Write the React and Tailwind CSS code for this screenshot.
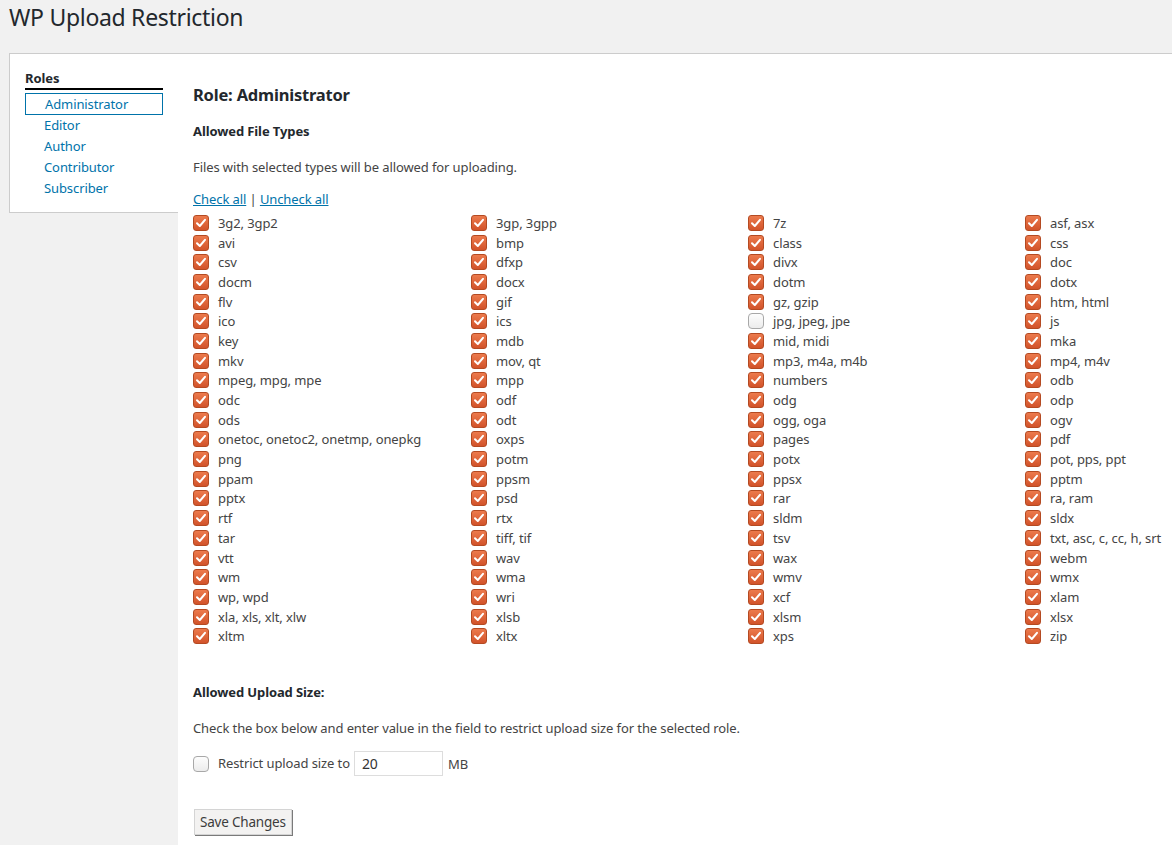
import React from "react";

const rows = [
  ["3g2, 3gp2", "3gp, 3gpp", "7z", "asf, asx"],
  ["avi", "bmp", "class", "css"],
  ["csv", "dfxp", "divx", "doc"],
  ["docm", "docx", "dotm", "dotx"],
  ["flv", "gif", "gz, gzip", "htm, html"],
  ["ico", "ics", "jpg, jpeg, jpe", "js"],
  ["key", "mdb", "mid, midi", "mka"],
  ["mkv", "mov, qt", "mp3, m4a, m4b", "mp4, m4v"],
  ["mpeg, mpg, mpe", "mpp", "numbers", "odb"],
  ["odc", "odf", "odg", "odp"],
  ["ods", "odt", "ogg, oga", "ogv"],
  ["onetoc, onetoc2, onetmp, onepkg", "oxps", "pages", "pdf"],
  ["png", "potm", "potx", "pot, pps, ppt"],
  ["ppam", "ppsm", "ppsx", "pptm"],
  ["pptx", "psd", "rar", "ra, ram"],
  ["rtf", "rtx", "sldm", "sldx"],
  ["tar", "tiff, tif", "tsv", "txt, asc, c, cc, h, srt"],
  ["vtt", "wav", "wax", "webm"],
  ["wm", "wma", "wmv", "wmx"],
  ["wp, wpd", "wri", "xcf", "xlam"],
  ["xla, xls, xlt, xlw", "xlsb", "xlsm", "xlsx"],
  ["xltm", "xltx", "xps", "zip"],
];

function Box({ checked }) {
  if (!checked) {
    return (
      <span className="w-[16px] h-[16px] shrink-0 rounded-[4px] border border-[#a8a8a8] bg-gradient-to-b from-[#fdfdfd] to-[#ececec]" />
    );
  }
  return (
    <span className="w-[16px] h-[16px] shrink-0 rounded-[3px] border border-[#b44a22] bg-gradient-to-b from-[#ec7a4c] to-[#d2532a] flex items-center justify-center">
      <svg width="12" height="12" viewBox="0 0 12 12">
        <path d="M2 6.2 L4.8 9 L10 2.8" fill="none" stroke="#fff" strokeWidth="2" strokeLinecap="round" strokeLinejoin="round" />
      </svg>
    </span>
  );
}

export default function App() {
  const font = { fontFamily: '"Noto Sans", "Open Sans", sans-serif' };
  return (
    <div className="min-h-screen bg-[#f1f1f1] text-[#444] text-[13px] tracking-[-0.1px]" style={font}>
      <h1 className="pl-[9px] pt-[2px] h-[53px] text-[23px] leading-[30px] text-[#23282d] font-normal tracking-[-0.3px]">
        WP Upload Restriction
      </h1>
      <div className="flex ml-[9px]">
        <div className="w-[169px] self-start bg-white border-l border-t border-b border-[#ccc] pl-[15px] pr-[15px] pt-[15px] pb-[13px]">
          <div className="font-bold text-[13px] leading-[18px] text-[#23282d] border-b-2 border-black pb-[1px]">Roles</div>
          <div className="mt-[3px] h-[22px] border border-[#0073aa] pl-[19px] text-[#0073aa] leading-[20px]">Administrator</div>
          {["Editor", "Author", "Contributor", "Subscriber"].map((r) => (
            <div key={r} className="pl-[19px] h-[21px] leading-[21px] text-[#0073aa]">{r}</div>
          ))}
        </div>
        <div className="flex-1 bg-white border-t border-[#ccc] pl-[15px] pb-[10px]">
          <h2 className="mt-[29px] text-[16.5px] leading-[24px] font-bold text-[#23282d] tracking-[-0.2px]">Role: Administrator</h2>
          <h3 className="mt-[15px] text-[13px] leading-[18px] font-bold text-[#23282d]">Allowed File Types</h3>
          <p className="mt-[18px] leading-[18px]">Files with selected types will be allowed for uploading.</p>
          <p className="mt-[14px] leading-[18px]">
            <a className="text-[#0073aa] underline">Check all</a> | <a className="text-[#0073aa] underline">Uncheck all</a>
          </p>
          <div className="mt-[5px] grid grid-cols-[278px_277px_277px_1fr] auto-rows-[19.7px]">
            {rows.flat().map((t) => (
              <div key={t} className="flex items-center gap-[9px] whitespace-nowrap">
                <Box checked={t !== "jpg, jpeg, jpe"} />
                <span className="leading-[18px]">{t}</span>
              </div>
            ))}
          </div>
          <h3 className="mt-[37px] text-[13px] leading-[18px] font-bold text-[#23282d]">Allowed Upload Size:</h3>
          <p className="mt-[18px] leading-[18px]">Check the box below and enter value in the field to restrict upload size for the selected role.</p>
          <div className="mt-[14px] flex items-center h-[25px]">
            <Box checked={false} />
            <span className="ml-[9px]">Restrict upload size to</span>
            <div className="ml-[4px] w-[89px] h-[25px] border border-[#ddd] px-[7px] text-[14px] leading-[23px] text-[#333]">20</div>
            <span className="ml-[5px] mt-[3px]">MB</span>
          </div>
          <button className="mt-[33px] ml-[1px] h-[26px] px-[5px] bg-[#f3f2f1] border border-[#d4d4d4] shadow-[1px_1px_0_#7a7a7a] text-[13.5px] leading-[24px] text-[#3c3c3c] tracking-[-0.2px]">
            Save Changes
          </button>
        </div>
      </div>
    </div>
  );
}
